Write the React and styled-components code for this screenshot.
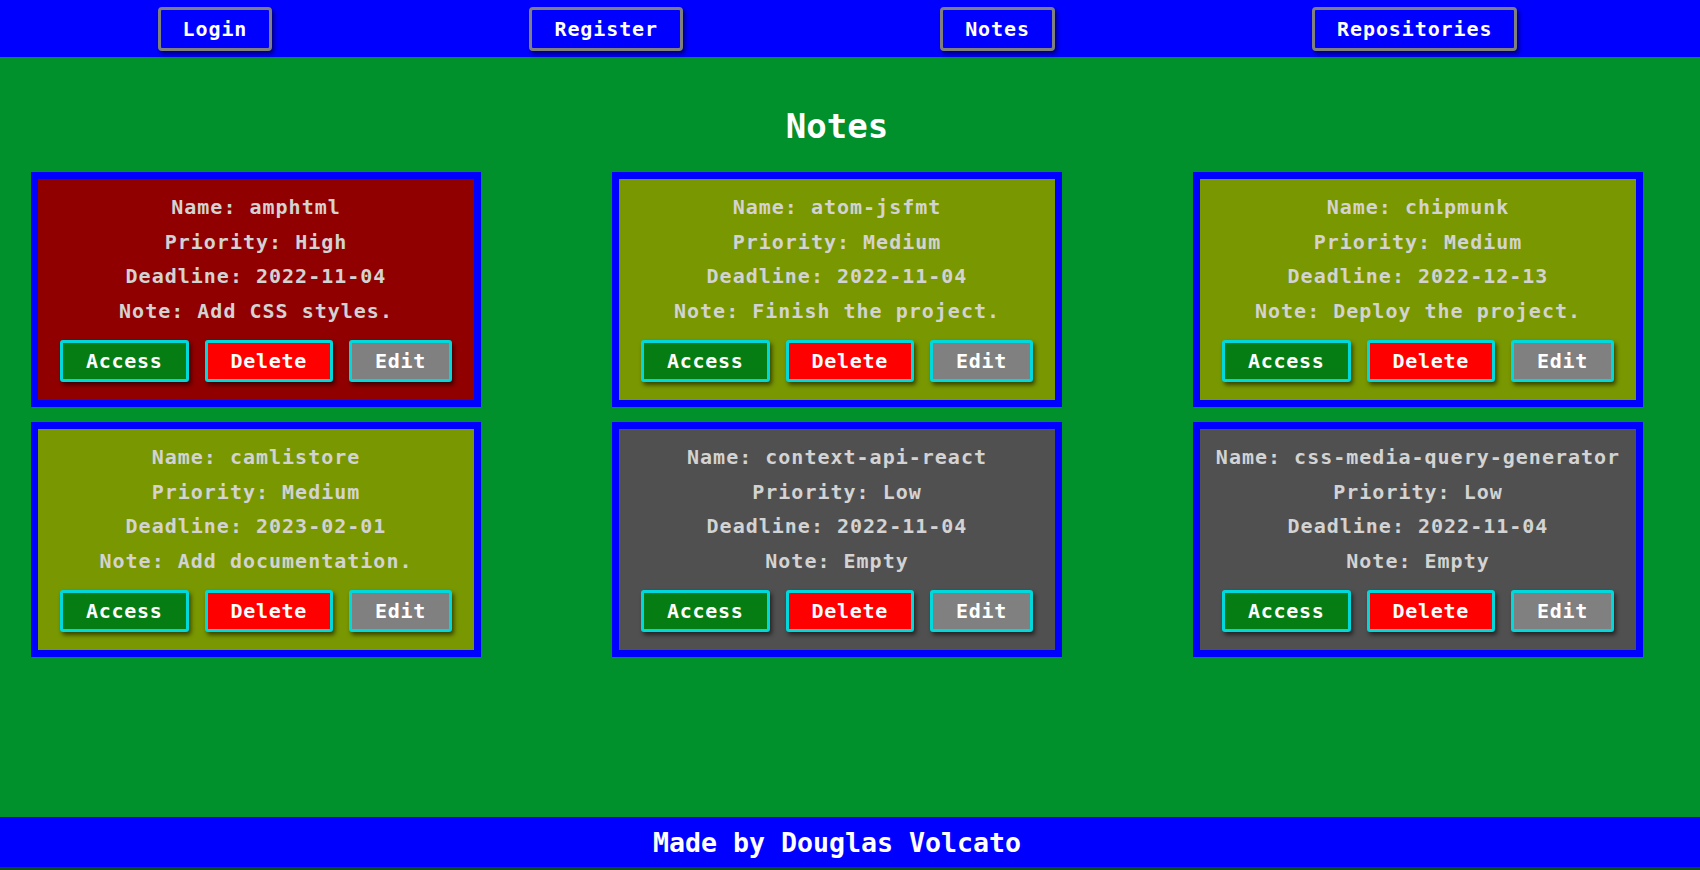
import styled, { createGlobalStyle } from 'styled-components'

const GlobalStyle = createGlobalStyle`
  html, body {
    margin: 0;
    padding: 0;
    background: #0a4f1a;
    font-family: "DejaVu Sans Mono", "Liberation Mono", monospace;
  }
`

const Page = styled.div`
  display: flex;
  flex-direction: column;
  min-height: 867px;
  background: #00902c;
`

const NavBar = styled.nav`
  display: flex;
  align-items: flex-start;
  justify-content: space-around;
  height: 57px;
  padding: 7px 54px 0 29px;
  box-sizing: border-box;
  background: #0000ff;
`

const NavButton = styled.button`
  height: 44px;
  padding: 0 22px;
  background: #0000ff;
  border: 3px solid #808080;
  border-radius: 4px;
  box-shadow: 2px 3px 4px rgba(0, 0, 0, 0.55);
  color: #fff;
  font-family: inherit;
  font-size: 20px;
  font-weight: bold;
  letter-spacing: 0.9px;
  cursor: pointer;
`

const Main = styled.main`
  flex: 1;
  display: flex;
  flex-direction: column;
  align-items: flex-start;
`

const Title = styled.h1`
  margin: 49px 0 26px;
  padding-left: 31px;
  width: 1612px;
  text-align: center;
  font-size: 34px;
  line-height: 40px;
  font-weight: bold;
  color: #fff;
`

const Grid = styled.section`
  display: grid;
  grid-template-columns: repeat(3, 450px);
  column-gap: 131px;
  row-gap: 15px;
  padding-left: 31px;
`

const Card = styled.article`
  display: flex;
  flex-direction: column;
  align-items: center;
  height: 235px;
  box-sizing: border-box;
  padding: 11px 0 0;
  border: 7px solid #0000ff;
  background: ${({ $tone }) => $tone};
  color: #d3d3d3;

  p {
    margin: 0;
    font-size: 20px;
    line-height: 34.5px;
    font-weight: bold;
    letter-spacing: 1px;
    white-space: nowrap;
  }
`

const Actions = styled.div`
  display: flex;
  gap: 16px;
  margin-top: 12px;
`

const ActionButton = styled.button`
  height: 42px;
  padding: 0 23px;
  background: ${({ $bg }) => $bg};
  border: 3px solid #00d8dc;
  border-radius: 3px;
  box-shadow: 2px 3px 4px rgba(0, 0, 0, 0.55);
  color: #fff;
  font-family: inherit;
  font-size: 20px;
  font-weight: bold;
  letter-spacing: 0.7px;
  cursor: pointer;
`

const Footer = styled.footer`
  display: flex;
  align-items: center;
  justify-content: center;
  height: 50px;
  padding-right: 26px;
  background: #0000ff;
  color: #fff;
  font-size: 26.6px;
  font-weight: bold;
`

const tones = {
  High: '#900000',
  Medium: '#799700',
  Low: '#505050',
}

const notes = [
  { name: 'amphtml', priority: 'High', deadline: '2022-11-04', note: 'Add CSS styles.' },
  { name: 'atom-jsfmt', priority: 'Medium', deadline: '2022-11-04', note: 'Finish the project.' },
  { name: 'chipmunk', priority: 'Medium', deadline: '2022-12-13', note: 'Deploy the project.' },
  { name: 'camlistore', priority: 'Medium', deadline: '2023-02-01', note: 'Add documentation.' },
  { name: 'context-api-react', priority: 'Low', deadline: '2022-11-04', note: 'Empty' },
  { name: 'css-media-query-generator', priority: 'Low', deadline: '2022-11-04', note: 'Empty' },
]

const links = ['Login', 'Register', 'Notes', 'Repositories']

function NoteCard({ note }) {
  return (
    <Card $tone={tones[note.priority]}>
      <p>Name: {note.name}</p>
      <p>Priority: {note.priority}</p>
      <p>Deadline: {note.deadline}</p>
      <p>Note: {note.note}</p>
      <Actions>
        <ActionButton $bg="#067d12">Access</ActionButton>
        <ActionButton $bg="#ff0000">Delete</ActionButton>
        <ActionButton $bg="#808080">Edit</ActionButton>
      </Actions>
    </Card>
  )
}

export default function App() {
  return (
    <>
      <GlobalStyle />
      <Page>
        <NavBar>
          {links.map((label) => (
            <NavButton key={label}>{label}</NavButton>
          ))}
        </NavBar>
        <Main>
          <Title>Notes</Title>
          <Grid>
            {notes.map((note) => (
              <NoteCard key={note.name} note={note} />
            ))}
          </Grid>
        </Main>
        <Footer>Made by Douglas Volcato</Footer>
      </Page>
    </>
  )
}
